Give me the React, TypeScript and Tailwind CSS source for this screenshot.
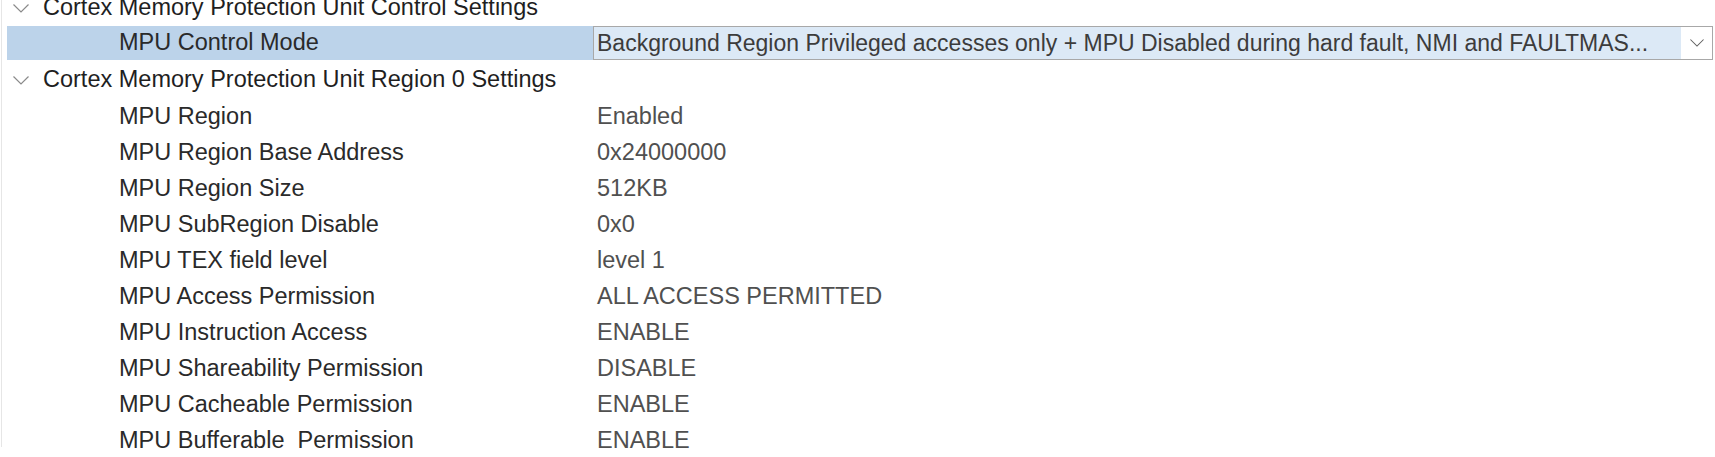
import React from 'react';

interface Param {
  label: string;
  value: string;
}

const regionParams: Param[] = [
  { label: 'MPU Region', value: 'Enabled' },
  { label: 'MPU Region Base Address', value: '0x24000000' },
  { label: 'MPU Region Size', value: '512KB' },
  { label: 'MPU SubRegion Disable', value: '0x0' },
  { label: 'MPU TEX field level', value: 'level 1' },
  { label: 'MPU Access Permission', value: 'ALL ACCESS PERMITTED' },
  { label: 'MPU Instruction Access', value: 'ENABLE' },
  { label: 'MPU Shareability Permission', value: 'DISABLE' },
  { label: 'MPU Cacheable Permission', value: 'ENABLE' },
  { label: 'MPU Bufferable  Permission', value: 'ENABLE' },
];

const Chevron: React.FC<{ className?: string }> = ({ className }) => (
  <svg viewBox="0 0 16 9" className={className} fill="none" stroke="currentColor" strokeWidth="1.2">
    <path d="M0.5 0.5 L8 8 L15.5 0.5" />
  </svg>
);

const GroupRow: React.FC<{ title: string }> = ({ title }) => (
  <div className="flex items-center h-[36px]">
    <div className="w-[41px] flex justify-start pl-[11px]">
      <Chevron className="w-[16px] h-[9px] text-[#8a8a8a]" />
    </div>
    <span className="text-[#1f1f1f] whitespace-pre">{title}</span>
  </div>
);

const ParamRow: React.FC<{ param: Param }> = ({ param }) => (
  <div className="flex items-center h-[36px] pt-[2px]">
    <span className="w-[591px] pl-[117px] text-[#2a2a2a] whitespace-pre">{param.label}</span>
    <span className="pl-[4px] text-[#505050] whitespace-pre">{param.value}</span>
  </div>
);

export default function App() {
  return (
    <div
      className="w-[1715px] h-[457px] overflow-hidden bg-white text-[23.5px] leading-none"
      style={{ fontFamily: '"Liberation Sans", Arial, sans-serif' }}
    >
      <div className="h-full border-l border-[#e6e6e6] ml-px -mt-[10px]">
        <GroupRow title="Cortex Memory Protection Unit Control Settings" />

        {/* selected row */}
        <div className="h-[36px] flex items-start">
          <div className="w-[586px] h-[34px] bg-[#bcd3ea] flex items-center pl-[112px] ml-[5px] text-[#2a2a2a]">
            MPU Control Mode
          </div>
          <div className="flex-1 mr-[2px] h-[34px] border border-[#a8a8a8] flex bg-white">
            <div className="flex-1 bg-[#dce9f6] flex items-center pl-[3px] text-[23px] text-[#3c3c3c] whitespace-pre overflow-hidden">
              Background Region Privileged accesses only + MPU Disabled during hard fault, NMI and FAULTMAS...
            </div>
            <div className="w-[31px] flex items-center justify-center">
              <Chevron className="w-[14px] h-[8px] text-[#606060]" />
            </div>
          </div>
        </div>

        <GroupRow title="Cortex Memory Protection Unit Region 0 Settings" />
        {regionParams.map(p => (
          <ParamRow key={p.label} param={p} />
        ))}
      </div>
    </div>
  );
}
